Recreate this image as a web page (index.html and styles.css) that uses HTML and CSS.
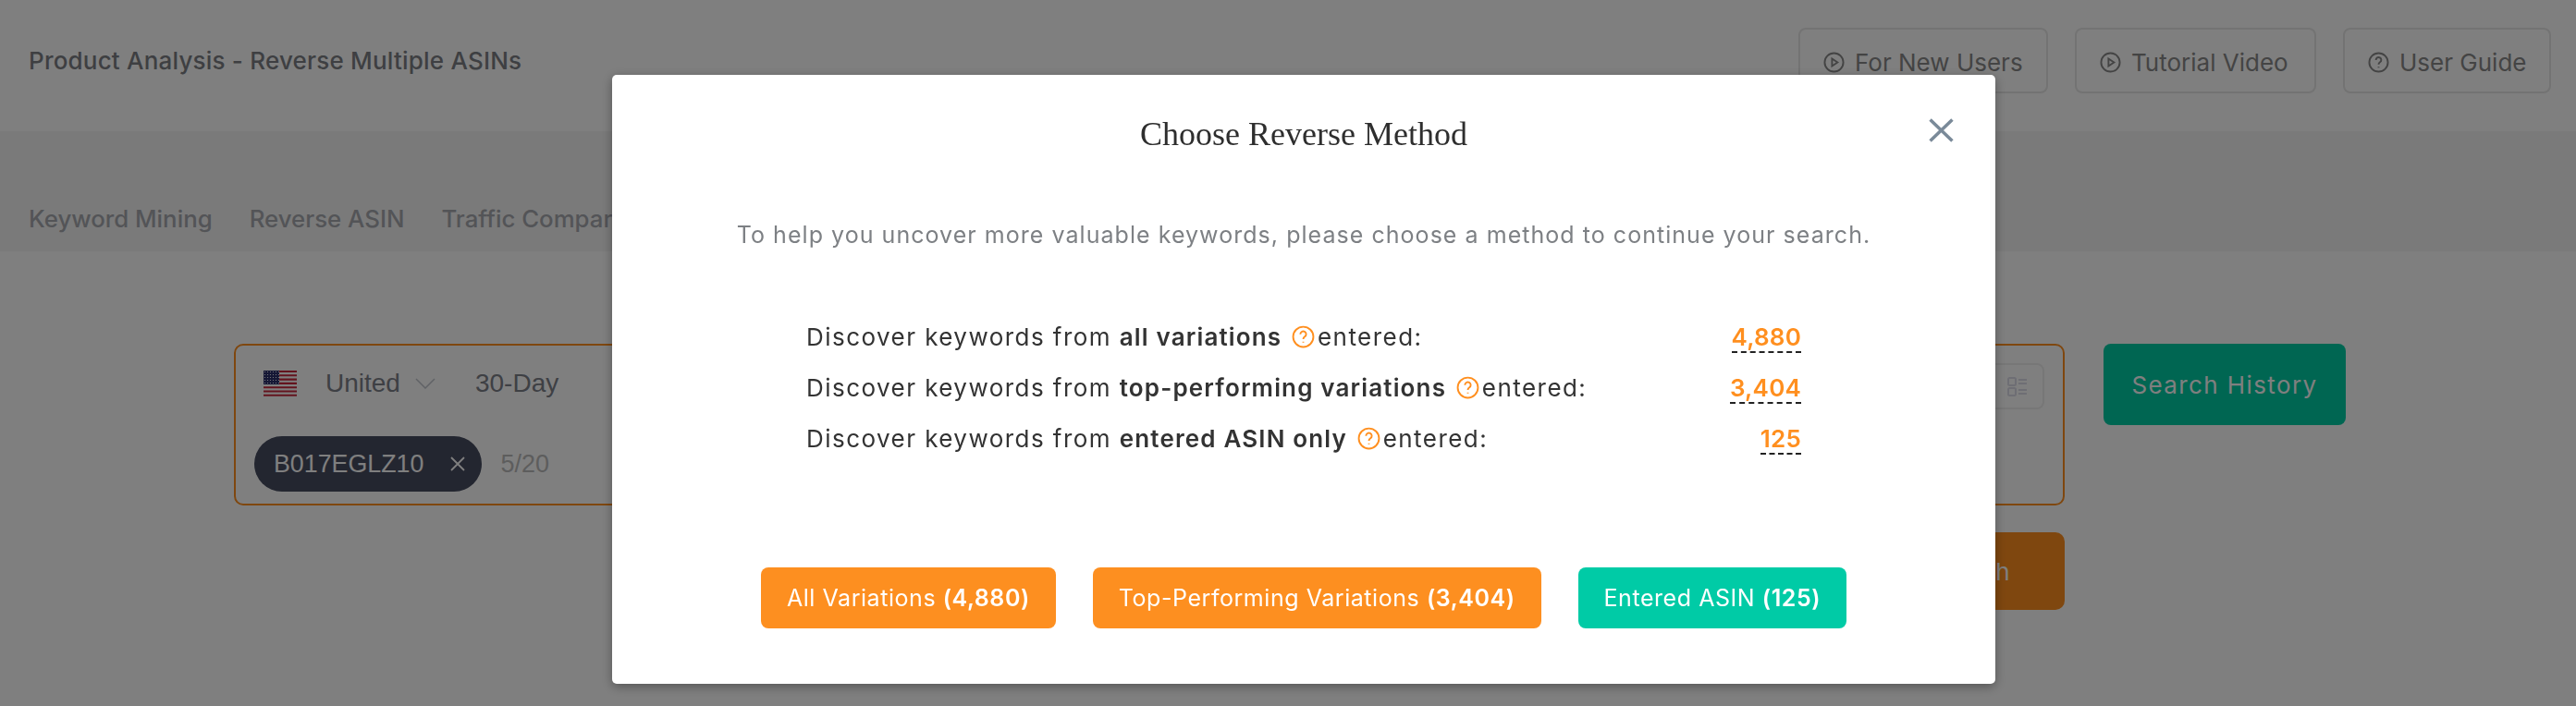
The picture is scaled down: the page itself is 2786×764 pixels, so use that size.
FILE: index.html
```html
<!DOCTYPE html>
<html lang="en">
<head>
    <meta charset="UTF-8">
    <title>Product Analysis - Reverse Multiple ASINs</title>
    <link rel="stylesheet" href="styles.css">
</head>
<body>
    <!-- Page behind the dialog -->
    <header class="page-header">
        <h1 class="page-title">Product Analysis - Reverse Multiple ASINs</h1>
        <div class="help-links">
            <a class="help-link help-link-new">
                <svg class="help-icon" viewBox="0 0 24 24"><circle cx="12" cy="12" r="10.5"/><path d="M9.8 7.8 16 12l-6.2 4.2z"/></svg>
                For New Users
            </a>
            <a class="help-link help-link-video">
                <svg class="help-icon" viewBox="0 0 24 24"><circle cx="12" cy="12" r="10.5"/><path d="M9.8 7.8 16 12l-6.2 4.2z"/></svg>
                Tutorial Video
            </a>
            <a class="help-link help-link-guide">
                <svg class="help-icon" viewBox="0 0 24 24"><circle cx="12" cy="12" r="10.5"/><path d="M9 9.3a3 3 0 1 1 4.6 2.5c-1 .7-1.6 1.2-1.6 2.5M12 17v1"/></svg>
                User Guide
            </a>
        </div>
    </header>

    <nav class="tabs">
        <a>Keyword Mining</a>
        <a>Reverse ASIN</a>
        <a>Traffic Comparison</a>
    </nav>

    <main class="search-area">
        <div class="search-column">
            <div class="search-box">
                <div class="search-options">
                    <svg class="flag" viewBox="0 0 36 28">
                        <defs>
                            <pattern id="stars" width="3" height="3" patternUnits="userSpaceOnUse">
                                <circle cx="1.5" cy="1.5" r=".6" fill="#fff"/>
                            </pattern>
                        </defs>
                        <rect width="36" height="28" fill="#fff"/>
                        <path d="M0 1h36M0 5.3h36M0 9.6h36M0 13.9h36M0 18.2h36M0 22.5h36M0 26.8h36" stroke="#c8283c" stroke-width="2.1"/>
                        <rect width="17" height="15" fill="#2a2f6b"/>
                        <rect width="17" height="15" fill="url(#stars)"/>
                    </svg>
                    <span class="market">United</span>
                    <svg class="chevron" viewBox="0 0 22 12"><path d="M1 1l10 10L21 1"/></svg>
                    <span class="period">30-Day</span>
                    <span class="view-toggle">
                        <svg viewBox="0 0 21 21"><rect x="1" y="1" width="8" height="8" rx="1.5"/><rect x="1" y="12" width="8" height="8" rx="1.5"/><path d="M12 3h9M12 7h9M12 14h9M12 18h9"/></svg>
                    </span>
                </div>
                <div class="asin-row">
                    <span class="asin-chip">
                        B017EGLZ10
                        <svg class="chip-close" viewBox="0 0 16 16"><path d="M1 1l14 14M15 1 1 15"/></svg>
                    </span>
                    <span class="asin-count">5/20</span>
                </div>
            </div>
            <div class="search-actions">
                <button class="search-button">Search</button>
            </div>
        </div>
        <button class="history-button">Search History</button>
    </main>

    <!-- Dialog -->
    <div class="overlay">
        <section class="dialog">
            <svg class="dialog-close" viewBox="0 0 26 25"><path d="M1.5 1.5l23 22M24.5 1.5l-23 22"/></svg>
            <h2 class="dialog-title">Choose Reverse Method</h2>
            <p class="dialog-intro">To help you uncover more valuable keywords, please choose a method to continue your search.</p>

            <div class="method-list">
                <div class="method-row">
                    <span>Discover keywords from <b>all variations</b>
                        <svg class="tip" viewBox="0 0 24 24"><circle cx="12" cy="12" r="10.5"/><path d="M9 9.3a3 3 0 1 1 4.6 2.5c-1 .7-1.6 1.2-1.6 2.5M12 17v1"/></svg>entered:</span>
                    <span class="method-count">4,880</span>
                </div>
                <div class="method-row">
                    <span>Discover keywords from <b>top-performing variations</b>
                        <svg class="tip" viewBox="0 0 24 24"><circle cx="12" cy="12" r="10.5"/><path d="M9 9.3a3 3 0 1 1 4.6 2.5c-1 .7-1.6 1.2-1.6 2.5M12 17v1"/></svg>entered:</span>
                    <span class="method-count">3,404</span>
                </div>
                <div class="method-row">
                    <span>Discover keywords from <b>entered ASIN only</b>
                        <svg class="tip" viewBox="0 0 24 24"><circle cx="12" cy="12" r="10.5"/><path d="M9 9.3a3 3 0 1 1 4.6 2.5c-1 .7-1.6 1.2-1.6 2.5M12 17v1"/></svg>entered:</span>
                    <span class="method-count">125</span>
                </div>
            </div>

            <div class="dialog-buttons">
                <button class="method-button">All Variations <b>(4,880)</b></button>
                <button class="method-button">Top-Performing Variations <b>(3,404)</b></button>
                <button class="method-button method-button-teal">Entered ASIN <b>(125)</b></button>
            </div>
        </section>
    </div>
</body>
</html>
```
FILE: styles.css
```css
* {
    box-sizing: border-box;
}

html, body {
    height: 100%;
}

body {
    margin: 0;
    overflow: hidden;
    background-color: #fff;
    font-family: Inter, "Noto Sans", sans-serif;
    color: #333;
}

button {
    border: none;
    font-family: inherit;
}

/* Page header */
.page-header {
    display: flex;
    justify-content: space-between;
    align-items: flex-start;
    height: 142px;
    padding: 30px 27px 0 31px;
}

.page-title {
    margin: 0;
    font-size: 26px;
    font-weight: 500;
    line-height: 71px;
    letter-spacing: 0.2px;
    color: #7c7e84;
}

.help-links {
    display: flex;
}

.help-link {
    display: flex;
    align-items: center;
    height: 71px;
    padding: 3px 0 0 25px;
    border: 2px solid #e6e6e6;
    border-radius: 8px;
    font-size: 26px;
    color: #888;
}

.help-link-new {
    width: 270px;
    margin-right: 29px;
}

.help-link-video {
    width: 261px;
    margin-right: 29px;
}

.help-link-guide {
    width: 225px;
}

.help-icon {
    width: 23px;
    height: 23px;
    margin-right: 11px;
    fill: none;
    stroke: #888;
    stroke-width: 2;
}

/* Tabs */
.tabs {
    display: flex;
    gap: 40px;
    height: 130px;
    padding: 77px 0 0 31px;
    background-color: #f5f5f5;
    font-size: 25.8px;
    font-weight: 500;
    line-height: 36px;
    color: #a6a8ae;
}

/* Search area */
.search-area {
    display: flex;
    align-items: flex-start;
    gap: 42px;
    padding: 100px 0 0 253px;
}

.search-column {
    width: 1980px;
}

.search-box {
    height: 175px;
    padding: 19px 20px 0;
    border: 2px solid #ff8f1f;
    border-radius: 10px;
}

.search-options {
    display: flex;
    align-items: flex-start;
    height: 50px;
    font-family: "Liberation Sans", sans-serif;
    font-size: 28px;
    line-height: 44px;
    color: #7c8089;
}

.flag {
    width: 36px;
    height: 28px;
    margin: 8px 0 0 10px;
}

.market {
    margin-left: 31px;
}

.chevron {
    width: 22px;
    height: 12px;
    margin: 16px 0 0 16px;
    fill: none;
    stroke: #c0c4cc;
    stroke-width: 1.5;
}

.period {
    margin-left: 43px;
}

.view-toggle {
    display: flex;
    align-items: center;
    justify-content: center;
    width: 60px;
    height: 50px;
    margin-left: auto;
    border: 2px solid #eee;
    border-radius: 8px;
}

.view-toggle svg {
    width: 21px;
    height: 21px;
    fill: none;
    stroke: #dcdce8;
    stroke-width: 2;
}

.asin-row {
    display: flex;
    align-items: center;
    margin-top: 29px;
    font-family: "Liberation Sans", sans-serif;
}

.asin-chip {
    display: flex;
    align-items: center;
    height: 60px;
    padding: 0 18px 0 21px;
    border-radius: 30px;
    background-color: #464c60;
    font-size: 26.8px;
    color: #fff;
}

.chip-close {
    width: 16px;
    height: 16px;
    margin-left: 29px;
    fill: none;
    stroke: #fff;
    stroke-width: 1.8;
}

.asin-count {
    margin-left: 20px;
    font-size: 27px;
    color: #bbb;
}

.search-actions {
    display: flex;
    justify-content: flex-end;
    margin-top: 29px;
}

.search-button {
    width: 260px;
    height: 84px;
    padding: 0 58px 0 0;
    border-radius: 10px;
    background-color: #ff8f1f;
    font-size: 26px;
    letter-spacing: 1.4px;
    text-align: right;
    color: #fff;
}

.history-button {
    width: 262px;
    height: 88px;
    border-radius: 8px;
    background-color: #00cca4;
    font-size: 26px;
    letter-spacing: 1.4px;
    color: #fff;
}

/* Dialog */
.overlay {
    position: fixed;
    top: 0;
    right: 0;
    bottom: 0;
    left: 0;
    background-color: rgba(0, 0, 0, 0.5);
}

.dialog {
    position: absolute;
    top: 81px;
    left: 662px;
    width: 1496px;
    height: 659px;
    padding-top: 40px;
    border-radius: 5px;
    background-color: #fff;
    box-shadow: 0 3px 12px rgba(0, 0, 0, 0.35);
}

.dialog-close {
    position: absolute;
    top: 47px;
    right: 45px;
    width: 27px;
    height: 26px;
    fill: none;
    stroke: #7a8a99;
    stroke-width: 3.4;
}

.dialog-title {
    margin: 0;
    font-family: "Liberation Serif", serif;
    font-size: 36px;
    font-weight: normal;
    line-height: 48px;
    text-align: center;
    color: #2e2e2e;
}

.dialog-intro {
    margin: 67px 0 0;
    font-size: 25px;
    line-height: 36px;
    letter-spacing: 1.04px;
    text-align: center;
    color: #7d8084;
}

.method-list {
    margin-top: 65px;
    padding: 0 210px;
}

.method-row {
    display: flex;
    justify-content: space-between;
    align-items: baseline;
    font-size: 26px;
    line-height: 55px;
    letter-spacing: 1.45px;
}

.method-row b {
    font-weight: 600;
    letter-spacing: 1.15px;
}

.tip {
    width: 25px;
    height: 25px;
    margin: 0 3px 0 2px;
    vertical-align: -3px;
    fill: none;
    stroke: #ff8f1f;
    stroke-width: 1.8;
}

.method-count {
    border-bottom: 2px dashed #222;
    font-weight: 600;
    line-height: 31px;
    letter-spacing: 0.2px;
    color: #ff8f1f;
}

.dialog-buttons {
    display: flex;
    justify-content: center;
    gap: 40px;
    margin-top: 112px;
}

.method-button {
    height: 66px;
    padding: 0 28px;
    border-radius: 8px;
    background-color: #fd8f20;
    font-size: 25px;
    letter-spacing: 0.55px;
    color: #fff;
}

.method-button b {
    font-weight: 600;
}

.method-button-teal {
    background-color: #00cba6;
}
```
